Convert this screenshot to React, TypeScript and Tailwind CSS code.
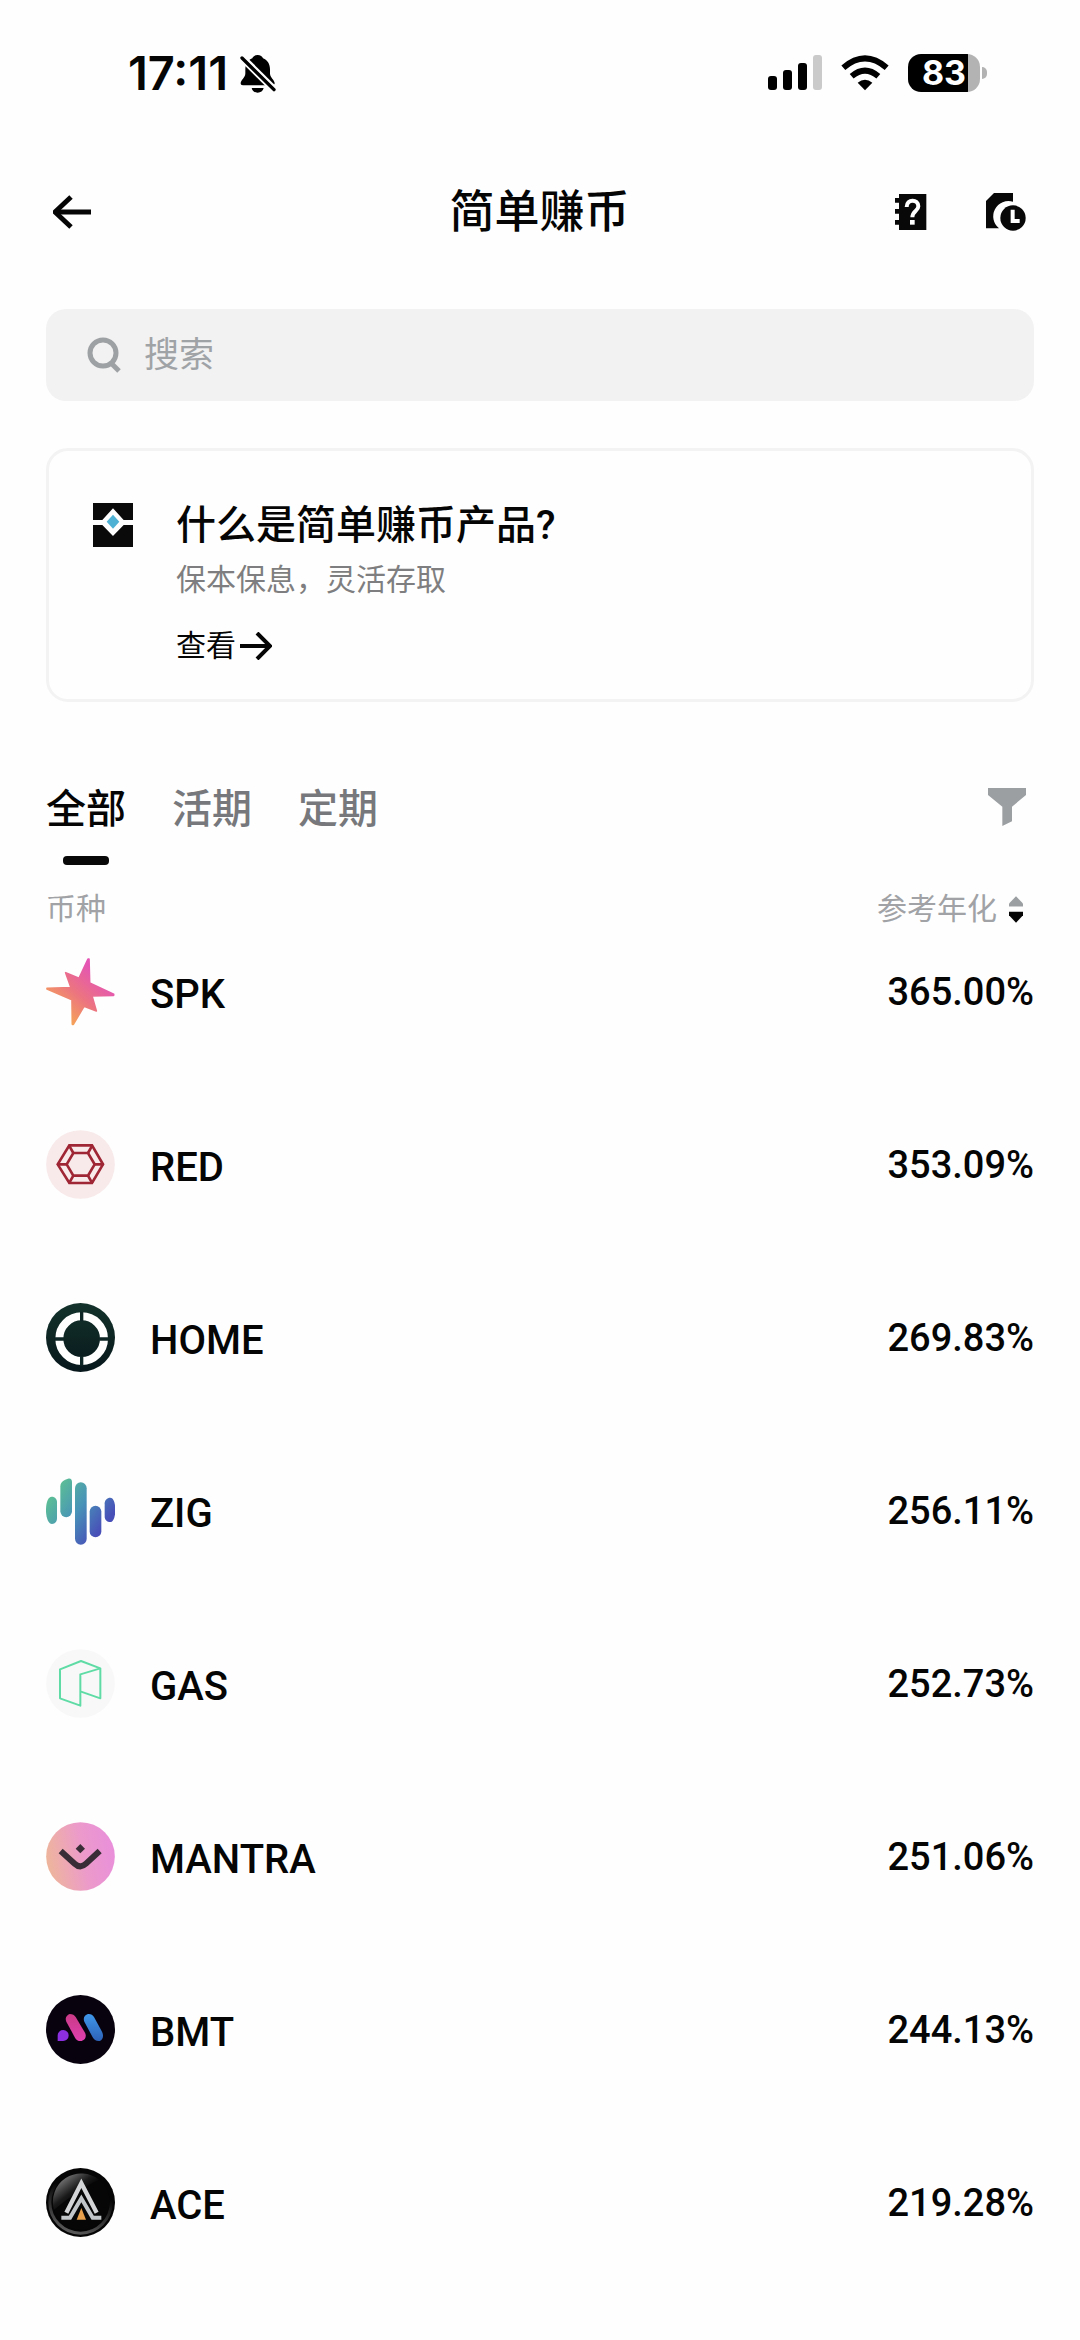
import React, { useState } from 'react';

type Coin = {
  symbol: string;
  rate: string;
  Logo: React.FC;
};

const SpkLogo: React.FC = () => (
  <svg viewBox="0 0 207 207" className="size-[69px] shrink-0" aria-hidden="true">
    <defs>
      <linearGradient id="spk" x1="0.15" y1="0.85" x2="0.75" y2="0.2">
        <stop offset="0" stopColor="#f6a754" />
        <stop offset="0.5" stopColor="#ec7480" />
        <stop offset="1" stopColor="#e455b4" />
      </linearGradient>
    </defs>
    <path
      d="M129 6 L131 78 L203 112 V115 L138 117 L151 162 L114 148 L82 202 H79 L78 128 L3 96 V94 L75 92 L59 47 L99 64 L126 6 Z"
      fill="url(#spk)"
      stroke="url(#spk)"
      strokeWidth="5"
      strokeLinejoin="round"
    />
  </svg>
);

const RedLogo: React.FC = () => (
  <svg viewBox="0 0 207 207" className="size-[69px] shrink-0" aria-hidden="true">
    <circle cx="103.5" cy="103.5" r="103" fill="#f8e9ea" />
    <g fill="none" stroke="#9f2634" strokeWidth="8">
      <path d="M35 103 L70 46 H138 L171 103 L138 159 H70 Z" />
      <path d="M62 103 L82 69 H126 L146 103 L126 137 H82 Z" />
      <path d="M34 103 H62 M69 46 L82 69 M139 46 L126 69 M172 103 H146 M139 160 L126 137 M69 160 L82 137" />
    </g>
  </svg>
);

const HomeLogo: React.FC = () => (
  <svg viewBox="0 0 207 207" className="size-[69px] shrink-0" aria-hidden="true">
    <defs>
      <linearGradient id="home" x1="0" y1="0" x2="0" y2="1">
        <stop offset="0" stopColor="#14332b" />
        <stop offset="1" stopColor="#07171c" />
      </linearGradient>
    </defs>
    <circle cx="103.5" cy="103.5" r="103.5" fill="url(#home)" />
    <circle cx="107" cy="107" r="67" fill="none" stroke="#fff" strokeWidth="24" />
    <path d="M107 26 V54 M107 160 V188 M26 108 H54 M160 108 H188" stroke="#0e2625" strokeWidth="10" />
  </svg>
);

const ZigLogo: React.FC = () => (
  <svg viewBox="0 0 207 207" className="size-[69px] shrink-0" aria-hidden="true">
    <defs>
      <linearGradient id="zig" gradientUnits="userSpaceOnUse" x1="30" y1="40" x2="175" y2="145">
        <stop offset="0" stopColor="#5bbd96" />
        <stop offset="0.5" stopColor="#4893b8" />
        <stop offset="1" stopColor="#4850b8" />
      </linearGradient>
    </defs>
    <g fill="url(#zig)">
      <path d="M17 62 C28 62 33 70 33 79 V127 C33 137 27 144 18 144 C-6 144 -6 62 17 62 Z" />
      <path d="M43 31 C43 17 55 11 66 8 C74 6 78 10 78 19 V106 A17.500 17.500 0 0 1 43 106 Z" />
      <rect x="87" y="19" width="35" height="187" rx="17.500" />
      <rect x="131" y="89" width="35" height="95" rx="17.500" />
      <path d="M193 65 C213 65 213 138 193 138 C183 138 176 131 176 122 V82 C176 73 183 65 193 65 Z" />
    </g>
  </svg>
);

const GasLogo: React.FC = () => (
  <svg viewBox="0 0 207 207" className="size-[69px] shrink-0" aria-hidden="true">
    <circle cx="103.5" cy="103.5" r="103" fill="#f8f8f8" />
    <path
      d="M42 61 L105 36 L163 58 V148 L103 127 V170 L42 148 Z M163 58 L103 76 V127"
      fill="none"
      stroke="#5fdca6"
      strokeWidth="6"
      strokeLinejoin="round"
    />
  </svg>
);

const MantraLogo: React.FC = () => (
  <svg viewBox="0 0 207 207" className="size-[69px] shrink-0" aria-hidden="true">
    <defs>
      <linearGradient id="mantra" x1="0" y1="0.6" x2="1" y2="0.4">
        <stop offset="0" stopColor="#eeb69a" />
        <stop offset="0.55" stopColor="#ec9acb" />
        <stop offset="1" stopColor="#e98fdb" />
      </linearGradient>
    </defs>
    <circle cx="103.5" cy="103.5" r="103" fill="url(#mantra)" />
    <path d="M44 87 L86 125 Q103 141 120 125 L161 87" fill="none" stroke="#392e37" strokeWidth="18" />
    <path d="M103 66 L117 80 L103 94 L89 80 Z" fill="#392e37" />
  </svg>
);

const BmtLogo: React.FC = () => (
  <svg viewBox="0 0 207 207" className="size-[69px] shrink-0" aria-hidden="true">
    <defs>
      <linearGradient id="bmtPink" x1="0" y1="0" x2="0" y2="1">
        <stop offset="0" stopColor="#c93a86" />
        <stop offset="1" stopColor="#e03fae" />
      </linearGradient>
      <linearGradient id="bmtBlue" x1="0" y1="0" x2="0" y2="1">
        <stop offset="0" stopColor="#3f97ea" />
        <stop offset="1" stopColor="#2d62b8" />
      </linearGradient>
    </defs>
    <circle cx="103.5" cy="103.5" r="103.5" fill="#08020f" />
    <path d="M35 138 V121 A16.500 16.500 0 1 1 51 138 Z" fill="#8b2fe0" />
    <path d="M61 80 C56 68 62 61 71 57 C80 57 85 60 89 66 L117 113 C122 123 119 134 107 138 C97 139 91 135 87 128 Z" fill="url(#bmtPink)" />
    <path d="M115 80 C110 68 117 60 126 57 C134 56 140 60 144 66 L168 110 C174 122 171 134 161 138 C151 139 144 135 140 127 Z" fill="url(#bmtBlue)" />
  </svg>
);

const AceLogo: React.FC = () => (
  <svg viewBox="0 0 207 207" className="size-[69px] shrink-0" aria-hidden="true">
    <defs>
      <linearGradient id="aceSheen" x1="0.1" y1="0.1" x2="0.6" y2="0.6">
        <stop offset="0" stopColor="#8a8a8a" />
        <stop offset="0.7" stopColor="#1a1a1a" />
        <stop offset="1" stopColor="#060606" />
      </linearGradient>
      <linearGradient id="aceRim" x1="0.6" y1="0" x2="0.3" y2="1">
        <stop offset="0.3" stopColor="#050505" />
        <stop offset="1" stopColor="#5c5c5c" />
      </linearGradient>
    </defs>
    <circle cx="103.5" cy="103.5" r="103.5" fill="#050505" />
    <circle cx="103.5" cy="103.5" r="92" fill="none" stroke="url(#aceRim)" strokeWidth="9" />
    <circle cx="106" cy="101" r="85" fill="#060606" />
    <path d="M24 125 A85 85 0 0 1 160 36 C120 50 75 85 24 125 Z" fill="url(#aceSheen)" />
    <path d="M61 134 L106 46 L152 134" fill="none" stroke="#d3d5d6" strokeWidth="13" />
    <path d="M46 149 H72 L106 91 L140 149 H166" fill="none" stroke="#c3c6c8" strokeWidth="12" />
    <path d="M106 120 L120 155 H92 Z" fill="#e9a04c" />
  </svg>
);

const coins: Coin[] = [
  { symbol: 'SPK', rate: '365.00%', Logo: SpkLogo },
  { symbol: 'RED', rate: '353.09%', Logo: RedLogo },
  { symbol: 'HOME', rate: '269.83%', Logo: HomeLogo },
  { symbol: 'ZIG', rate: '256.11%', Logo: ZigLogo },
  { symbol: 'GAS', rate: '252.73%', Logo: GasLogo },
  { symbol: 'MANTRA', rate: '251.06%', Logo: MantraLogo },
  { symbol: 'BMT', rate: '244.13%', Logo: BmtLogo },
  { symbol: 'ACE', rate: '219.28%', Logo: AceLogo },
];

const tabs = ['全部', '活期', '定期'];

const StatusBar: React.FC = () => (
  <div className="flex h-[146px] items-center justify-between pl-32 pr-[93px] font-['Inter',sans-serif]">
    <div className="flex items-center gap-3">
      <span className="text-[47px] leading-[56px] font-semibold">17:11</span>
      {/* Muted bell */}
      <svg viewBox="0 0 108 117" className="h-[39px] w-9" aria-hidden="true">
        <path
          d="M53 3 C61 3 67 7 69 13 C83 18 90 31 90 46 V58 C90 72 104 78 104 88 C104 92 101 94 97 94 H9 C4 94 2 92 2 88 C2 78 16 72 16 58 V46 C16 31 23 18 37 13 C39 7 45 3 53 3 Z M35 102 H71 C69 111 62 116 53 116 C44 116 37 111 35 102 Z"
          fill="#000"
        />
        <path d="M0 5 L108 112" stroke="#fefefe" strokeWidth="22" />
        <path d="M6 12 L102 107" stroke="#000" strokeWidth="10" strokeLinecap="round" />
      </svg>
    </div>
    <div className="flex items-center">
      <svg viewBox="0 0 54 36" className="mr-[19px] h-9 w-[54px]" aria-hidden="true">
        <rect x="0" y="21" width="9" height="14" rx="3" />
        <rect x="15" y="15" width="9" height="20" rx="3" />
        <rect x="30" y="8" width="9" height="27" rx="3" />
        <rect x="45" y="0" width="9" height="35" rx="3" fill="#cacaca" />
      </svg>
      <svg viewBox="0 0 144 108" className="mr-[19px] h-9 w-12" aria-hidden="true">
        <path d="M72 106 L50 83 Q72 66 94 83 Z" />
        <path d="M32 64 Q72 30 112 64" fill="none" stroke="#000" strokeWidth="18" />
        <path d="M7 38 Q72 -18 137 38" fill="none" stroke="#000" strokeWidth="18" />
      </svg>
      <div className="flex h-[38px] w-[72px] items-center justify-center rounded-[13px] bg-[linear-gradient(to_right,#000_60px,#b3b3b3_60px)]">
        <span className="text-[34px] leading-[42px] font-bold text-white">83</span>
      </div>
      <span className="ml-0.5 h-3 w-[5px] rounded-r-full bg-[#b3b3b3]" />
    </div>
  </div>
);

const Header: React.FC = () => (
  <header className="grid h-[132px] grid-cols-[1fr_auto_1fr] items-center pr-[54px] pl-[53px]">
    <button type="button" aria-label="返回" className="justify-self-start">
      <svg viewBox="2 0 38 34" className="h-[34px] w-[38px]" fill="none" stroke="#050505" strokeWidth="5" aria-hidden="true">
        <path d="M4 17 H40" />
        <path d="M20 2 L4 17 L20 32" strokeLinejoin="round" />
      </svg>
    </button>
    <h1 className="pt-0.5 text-[45px] leading-[56px] font-medium">简单赚币</h1>
    <div className="flex items-center gap-[59px] justify-self-end">
      <button type="button" aria-label="帮助">
        <svg viewBox="0 0 96 108" className="h-9 w-8" aria-hidden="true">
          <path d="M12 0 H94 V108 H12 V92 H0 V78 H12 V59 H0 V45 H12 V26 H0 V12 H12 Z" fill="#080808" />
          <path d="M35 39 C35 14 70 14 70 37 C70 52 52 51 52 70" fill="none" stroke="#fff" strokeWidth="12" />
          <rect x="45" y="78" width="14" height="14" fill="#fff" />
        </svg>
      </button>
      <button type="button" aria-label="历史记录">
        <svg viewBox="0 0 120 114" className="h-[38px] w-10" aria-hidden="true">
          <path d="M24 0 H81 V26 A46 46 0 0 0 39 106 H0 V24 Z" fill="#080808" />
          <circle cx="81" cy="75" r="38" fill="#080808" />
          <path d="M80 50 V84 H101" fill="none" stroke="#fff" strokeWidth="12" />
        </svg>
      </button>
    </div>
  </header>
);

const IntroCard: React.FC = () => (
  <section className="mt-[47px] flex gap-[43px] rounded-[22px] border-[3px] border-[#f3f3f3] pt-[51px] pr-10 pb-[29px] pl-11">
    <svg viewBox="0 0 120 132" className="mt-px h-11 w-10 shrink-0" aria-hidden="true">
      <path d="M0 0 H120 V51 H92 L60 16 L28 51 H0 Z M0 66 H28 L60 99 L92 66 H120 V132 H0 Z" fill="#0a0a0a" />
      <path d="M60 35 L79 56 L60 77 L41 56 Z" fill="#4fb1d3" />
    </svg>
    <div>
      <h2 className="text-[40px] leading-[48px] font-medium">什么是简单赚币产品?</h2>
      <p className="mt-1.5 text-[30px] leading-[48px] text-[#7e7e80]">保本保息，灵活存取</p>
      <a href="#intro" className="mt-[18px] flex items-center gap-1 text-[30px] leading-[48px]">
        查看
        <svg viewBox="0 0 32 28" className="h-7 w-8" fill="none" stroke="#050505" strokeWidth="4" aria-hidden="true">
          <path d="M0 14 H29 M17 1 L30 14 L17 27" />
        </svg>
      </a>
    </div>
  </section>
);

const App: React.FC = () => {
  const [activeTab, setActiveTab] = useState(tabs[0]);

  return (
    <div className="min-h-screen bg-[#fefefe] font-['Roboto','Noto_Sans_CJK_SC',sans-serif] text-[#050505]">
      <StatusBar />
      <Header />

      <main className="px-[46px]">
        <label className="mt-[31px] flex h-[92px] items-center gap-[22px] rounded-[20px] bg-[#f2f2f2] pl-10">
          <svg viewBox="0 0 36 36" className="size-9 shrink-0" fill="none" stroke="#9ea1a4" strokeWidth="5" aria-hidden="true">
            <circle cx="17" cy="16" r="13" />
            <path d="M25 26 L33 34" />
          </svg>
          <input
            type="text"
            aria-label="搜索"
            placeholder="搜索"
            className="min-w-0 flex-1 bg-transparent pt-0.5 text-[35px] leading-[56px] outline-none placeholder:text-[#a0a3a6]"
          />
        </label>

        <IntroCard />

        {/* Product type tabs */}
        <div className="mt-20 flex items-start justify-between">
          <div className="flex gap-[46px]">
            {tabs.map((tab) => (
              <button
                key={tab}
                type="button"
                onClick={() => setActiveTab(tab)}
                className={`flex flex-col items-center text-[40px] leading-[56px] font-medium ${activeTab === tab ? '' : 'text-[#77787b]'}`}
              >
                {tab}
                <span className={`mt-[18px] h-[9px] w-[46px] rounded-[4px] ${activeTab === tab ? 'bg-[#080808]' : ''}`} />
              </button>
            ))}
          </div>
          <button type="button" aria-label="筛选" className="mt-1.5 mr-2">
            <svg viewBox="0 0 114 114" className="size-[38px]" aria-hidden="true">
              <path d="M0 0 H114 V21 L72 56 V100 L43 114 V56 L0 21 Z" fill="#9c9fa2" />
            </svg>
          </button>
        </div>

        <table className="w-full">
          <thead>
            <tr className="text-[30px] leading-10 text-[#a0a2a5]">
              <th scope="col" className="pt-6 text-left font-normal">币种</th>
              <th scope="col" className="pt-6 font-normal">
                <button type="button" className="ml-auto flex items-center gap-3 pr-[11px]">
                  参考年化
                  <svg viewBox="0 0 42 80" className="h-[27px] w-3.5" aria-hidden="true">
                    <path d="M21 0 L42 22 V31 H0 V22 Z" fill="#9c9fa2" />
                    <path d="M0 47 H42 V57 L21 80 L0 57 Z" fill="#050505" />
                  </svg>
                </button>
              </th>
            </tr>
          </thead>
          <tbody>
            {coins.map(({ symbol, rate, Logo }) => (
              <tr key={symbol}>
                <td className="pt-7 pb-[76px]">
                  <div className="flex items-center gap-[35px]">
                    <Logo />
                    <span className="pt-1.5 text-[40px] leading-[48px] font-medium">{symbol}</span>
                  </div>
                </td>
                <td className="pt-7 pb-[76px] text-right text-[38px] leading-[48px] font-medium">{rate}</td>
              </tr>
            ))}
          </tbody>
        </table>
      </main>
    </div>
  );
};

export default App;
